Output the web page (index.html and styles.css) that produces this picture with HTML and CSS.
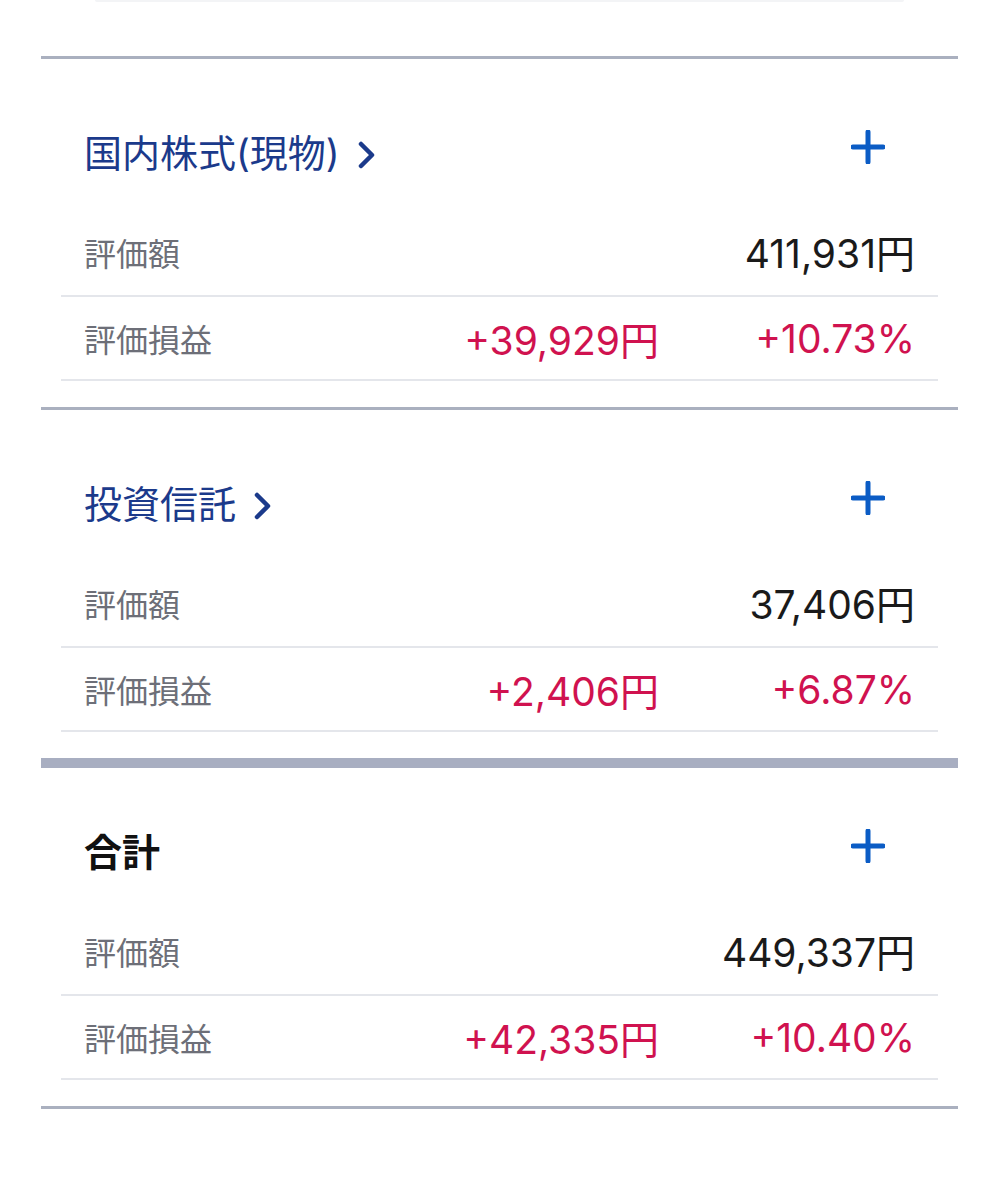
FILE: index.html
```html
<!DOCTYPE html>
<html lang="ja">
<head>
    <meta charset="UTF-8">
    <meta name="viewport" content="width=device-width, initial-scale=1.0">
    <title>資産状況</title>
    <link rel="stylesheet" href="styles.css">
</head>
<body>
<div class="card-edge"></div>

<div class="page">
    <div class="divider divider-top"></div>

    <section class="holding">
        <div class="holding-head">
            <a class="holding-title" href="#">国内株式(現物)
                <svg class="chevron" width="18" height="28" viewBox="0 0 18 28"><path d="M3 3 L14 14 L3 25" fill="none" stroke="currentColor" stroke-width="4.5" stroke-linecap="round" stroke-linejoin="round"/></svg>
            </a>
            <svg class="plus" width="34" height="34" viewBox="0 0 34 34"><path d="M17 2 V32 M2 17 H32" stroke="currentColor" stroke-width="5" stroke-linecap="round"/></svg>
        </div>
        <div class="rows">
            <div class="row">
                <span class="label">評価額</span>
                <span class="value value-wide">411,931円</span>
            </div>
            <div class="row">
                <span class="label">評価損益</span>
                <span class="value gain">+39,929円</span>
                <span class="value gain">+10.73%</span>
            </div>
        </div>
    </section>

    <div class="divider"></div>

    <section class="holding">
        <div class="holding-head">
            <a class="holding-title" href="#">投資信託
                <svg class="chevron" width="18" height="28" viewBox="0 0 18 28"><path d="M3 3 L14 14 L3 25" fill="none" stroke="currentColor" stroke-width="4.5" stroke-linecap="round" stroke-linejoin="round"/></svg>
            </a>
            <svg class="plus" width="34" height="34" viewBox="0 0 34 34"><path d="M17 2 V32 M2 17 H32" stroke="currentColor" stroke-width="5" stroke-linecap="round"/></svg>
        </div>
        <div class="rows">
            <div class="row">
                <span class="label">評価額</span>
                <span class="value value-wide">37,406円</span>
            </div>
            <div class="row">
                <span class="label">評価損益</span>
                <span class="value gain">+2,406円</span>
                <span class="value gain">+6.87%</span>
            </div>
        </div>
    </section>

    <div class="divider divider-thick"></div>

    <section class="holding holding-total">
        <div class="holding-head">
            <span class="holding-title total-title">合計</span>
            <svg class="plus" width="34" height="34" viewBox="0 0 34 34"><path d="M17 2 V32 M2 17 H32" stroke="currentColor" stroke-width="5" stroke-linecap="round"/></svg>
        </div>
        <div class="rows">
            <div class="row">
                <span class="label">評価額</span>
                <span class="value value-wide">449,337円</span>
            </div>
            <div class="row">
                <span class="label">評価損益</span>
                <span class="value gain">+42,335円</span>
                <span class="value gain">+10.40%</span>
            </div>
        </div>
    </section>

    <div class="divider"></div>
</div>
</body>
</html>
```

FILE: styles.css
```css
body {
    margin: 0;
    padding: 0;
    background-color: #fff;
    font-family: "Liberation Sans", "Noto Sans CJK JP", sans-serif;
    color: #1a1a1a;
}

.card-edge {
    height: 2px;
    margin: 0 95px;
    background-color: #f3f4f6;
    border-radius: 0 0 4px 4px;
}

.page {
    margin: 0 41px;
}

.divider {
    height: 3px;
    background-color: #aab0bf;
}

.divider-top {
    margin-top: 54px;
}

.divider-thick {
    height: 10px;
    background-color: #a8aec1;
}

.holding {
    padding-bottom: 26px;
}

.holding-head {
    display: flex;
    align-items: center;
    justify-content: space-between;
    height: 48px;
    padding: 70px 73px 36px 43px;
}

.holding-total .holding-head {
    padding-top: 60px;
}

.holding-title {
    display: flex;
    align-items: center;
    gap: 18px;
    font-family: Inter, "Noto Sans CJK JP", sans-serif;
    font-size: 38px;
    line-height: 48px;
    color: #1b3a8b;
    text-decoration: none;
}

.total-title {
    color: #111;
    font-weight: bold;
}

.chevron {
    color: #1b3a8b;
    margin-top: 4px;
}

.plus {
    color: #0b5cc5;
    margin-bottom: 12px;
}

.rows {
    margin: 0 20px;
}

.row {
    display: grid;
    grid-template-columns: 1fr auto 256px;
    align-items: center;
    height: 82px;
    padding: 0 23px;
    border-bottom: 2px solid #e4e6eb;
}

.label {
    font-size: 32px;
    color: #6d6f78;
}

.row:first-child .label {
    padding-bottom: 4px;
}

.value {
    font-family: Inter, "Noto Sans CJK JP", sans-serif;
    font-size: 39px;
    text-align: right;
}

.value-wide {
    grid-column: 2 / 4;
    padding-bottom: 6px;
}

.gain {
    color: #d0124f;
}
```
